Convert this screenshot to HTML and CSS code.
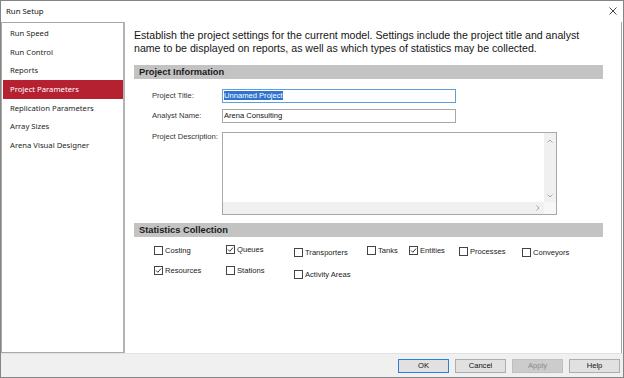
FILE: index.html
```html
<!DOCTYPE html>
<html lang="en">
<head>
    <meta charset="UTF-8">
    <title>Run Setup</title>
    <link rel="stylesheet" href="styles.css">
</head>
<body>
    <div class="window">
        <div class="titlebar">
            <span>Run Setup</span>
            <svg class="close" width="8" height="8" viewBox="0 0 8 8">
                <path d="M0.5 0.5L7.5 7.5M7.5 0.5L0.5 7.5" stroke="#333" stroke-width="0.9" fill="none"/>
            </svg>
        </div>
        <div class="content">
            <ul class="nav">
                <li>Run Speed</li>
                <li>Run Control</li>
                <li>Reports</li>
                <li class="active">Project Parameters</li>
                <li>Replication Parameters</li>
                <li>Array Sizes</li>
                <li>Arena Visual Designer</li>
            </ul>
            <div class="main">
                <p class="intro">Establish the project settings for the current model. Settings include the project title and analyst name to be displayed on reports, as well as which types of statistics may be collected.</p>

                <div class="section">Project Information</div>
                <div class="form">
                    <label>Project Title:</label>
                    <div class="field focus"><span class="sel">Unnamed Project</span></div>
                    <label>Analyst Name:</label>
                    <div class="field">Arena Consulting</div>
                    <label class="top">Project Description:</label>
                    <div class="memo">
                        <div class="memo-text"></div>
                        <div class="vbar">
                            <svg width="6" height="4" viewBox="0 0 6 4"><path d="M0.5 3.5L3 1L5.5 3.5" stroke="#a6a6a6" fill="none"/></svg>
                            <svg width="6" height="4" viewBox="0 0 6 4"><path d="M0.5 0.5L3 3L5.5 0.5" stroke="#a6a6a6" fill="none"/></svg>
                        </div>
                        <div class="hbar">
                            <svg width="4" height="6" viewBox="0 0 4 6"><path d="M0.5 0.5L3 3L0.5 5.5" stroke="#a6a6a6" fill="none"/></svg>
                        </div>
                        <div class="corner"></div>
                    </div>
                </div>

                <div class="section stats-head">Statistics Collection</div>
                <div class="stats">
                    <div class="check"><span class="box"></span>Costing</div>
                    <div class="check up"><span class="box"><svg width="7" height="7" viewBox="0 0 7 7"><path d="M1 3.5L2.8 5.3L6 1.6" stroke="#333" fill="none"/></svg></span>Queues</div>
                    <div class="check low"><span class="box"></span>Transporters</div>
                    <div class="check"><span class="box"></span>Tanks</div>
                    <div class="check"><span class="box"><svg width="7" height="7" viewBox="0 0 7 7"><path d="M1 3.5L2.8 5.3L6 1.6" stroke="#333" fill="none"/></svg></span>Entities</div>
                    <div class="check low1"><span class="box"></span>Processes</div>
                    <div class="check low"><span class="box"></span>Conveyors</div>

                    <div class="check"><span class="box"><svg width="7" height="7" viewBox="0 0 7 7"><path d="M1 3.5L2.8 5.3L6 1.6" stroke="#333" fill="none"/></svg></span>Resources</div>
                    <div class="check"><span class="box"></span>Stations</div>
                    <div class="check lower"><span class="box"></span>Activity Areas</div>
                </div>
            </div>
        </div>
        <div class="footer">
            <button class="btn default">OK</button>
            <button class="btn">Cancel</button>
            <button class="btn" disabled>Apply</button>
            <button class="btn">Help</button>
        </div>
    </div>
</body>
</html>
```

FILE: styles.css
```css
* {
    box-sizing: border-box;
}

body {
    margin: 0;
    background: #fff;
    font-family: "Liberation Sans", Arial, sans-serif;
}

.window {
    width: 624px;
    height: 378px;
    border: 1px solid #858585;
    display: flex;
    flex-direction: column;
    background: #fff;
}

/* title bar */
.titlebar {
    height: 21px;
    display: flex;
    align-items: center;
    justify-content: space-between;
    padding: 0 6px 1px 5px;
    font-family: "Noto Sans", sans-serif;
    font-size: 7.8px;
    color: #111;
}

.content {
    flex: 1;
    display: flex;
    min-height: 0;
}

/* left list */
.nav {
    width: 124px;
    margin: 0;
    padding: 1px 0 1px 1px;
    list-style: none;
    border: 1px solid #a9a9a9;
    border-right: 2px solid #b3b3b3;
    font-family: "Noto Sans", sans-serif;
    font-size: 7.7px;
    color: #1e1e1e;
}

.nav li {
    height: 18.67px;
    line-height: 18.67px;
    padding-left: 7px;
    white-space: nowrap;
}

.nav li.active {
    background: #b52131;
    color: #fff;
}

/* right side */
.main {
    flex: 1;
    border-right: 1px solid #a3a3a3;
    margin-right: 1px;
    padding: 7px 18px 0 9px;
}

.intro {
    margin: 0;
    font-size: 10.6px;
    line-height: 13px;
    color: #151515;
}

.section {
    margin-top: 10px;
    height: 14px;
    line-height: 14px;
    padding-left: 5px;
    background: #c3c3c3;
    font-weight: bold;
    font-size: 9.3px;
    color: #1a1a1a;
}

.form {
    margin: 10px 0 0 18px;
    display: grid;
    grid-template-columns: 70px auto;
    row-gap: 6px;
    align-items: center;
    justify-items: start;
    font-size: 7.6px;
}

.form label {
    color: #333;
    margin-top: -2px;
}

.form label.top {
    align-self: start;
    margin-top: 3px;
}

.field {
    width: 234px;
    height: 14px;
    border: 1px solid #a8a8a8;
    padding-left: 1px;
    line-height: 12px;
    color: #111;
    white-space: nowrap;
}

.field.focus {
    border-color: #5b9fe0;
}

.sel {
    background: #2f74d0;
    color: #fff;
}

.memo {
    width: 335px;
    height: 83px;
    margin-top: 3px;
    border: 1px solid #a8a8a8;
    display: grid;
    grid-template-columns: 1fr 12px;
    grid-template-rows: 1fr 12px;
}

.vbar {
    background: #f0f0f0;
    display: flex;
    flex-direction: column;
    justify-content: space-between;
    align-items: center;
    padding: 6px 0 4px;
}

.hbar {
    background: #f0f0f0;
    display: flex;
    justify-content: flex-end;
    align-items: center;
    padding-right: 4px;
}

.corner {
    background: #f7f7f7;
}

.stats-head {
    margin-top: 8px;
}

/* check boxes */
.stats {
    padding: 8.5px 0 0 20px;
    display: grid;
    grid-template-columns: 72px 68px 73px 42px 50px 63px auto;
    grid-auto-rows: 10px;
    row-gap: 9.5px;
    align-items: start;
    font-size: 7.6px;
    color: #222;
}

.check {
    display: flex;
    align-items: center;
    gap: 2px;
    height: 10px;
    white-space: nowrap;
}

.check.up {
    margin-top: -1px;
}

.check.low1 {
    margin-top: 1px;
}

.check.low {
    margin-top: 2px;
}

.check.lower {
    margin-top: 4px;
}

.box {
    width: 9px;
    height: 9px;
    border: 1px solid #444;
    background: #fff;
    display: flex;
    align-items: center;
    justify-content: center;
}

/* bottom buttons */
.footer {
    height: 24px;
    background: #f0f0f0;
    border-top: 1px solid #e2e2e2;
    display: flex;
    justify-content: flex-end;
    align-items: flex-start;
    gap: 6px;
    padding: 5px 3px 0 0;
}

.btn {
    width: 51px;
    height: 14px;
    padding: 0;
    border: 1px solid #adadad;
    background: #e1e1e1;
    font-family: "Liberation Sans", Arial, sans-serif;
    font-size: 7.6px;
    line-height: 12px;
    color: #111;
}

.btn.default {
    border-color: #2b7fd6;
}

.btn:disabled {
    background: #cccccc;
    border-color: #bfbfbf;
    color: #8a8a8a;
}
```
